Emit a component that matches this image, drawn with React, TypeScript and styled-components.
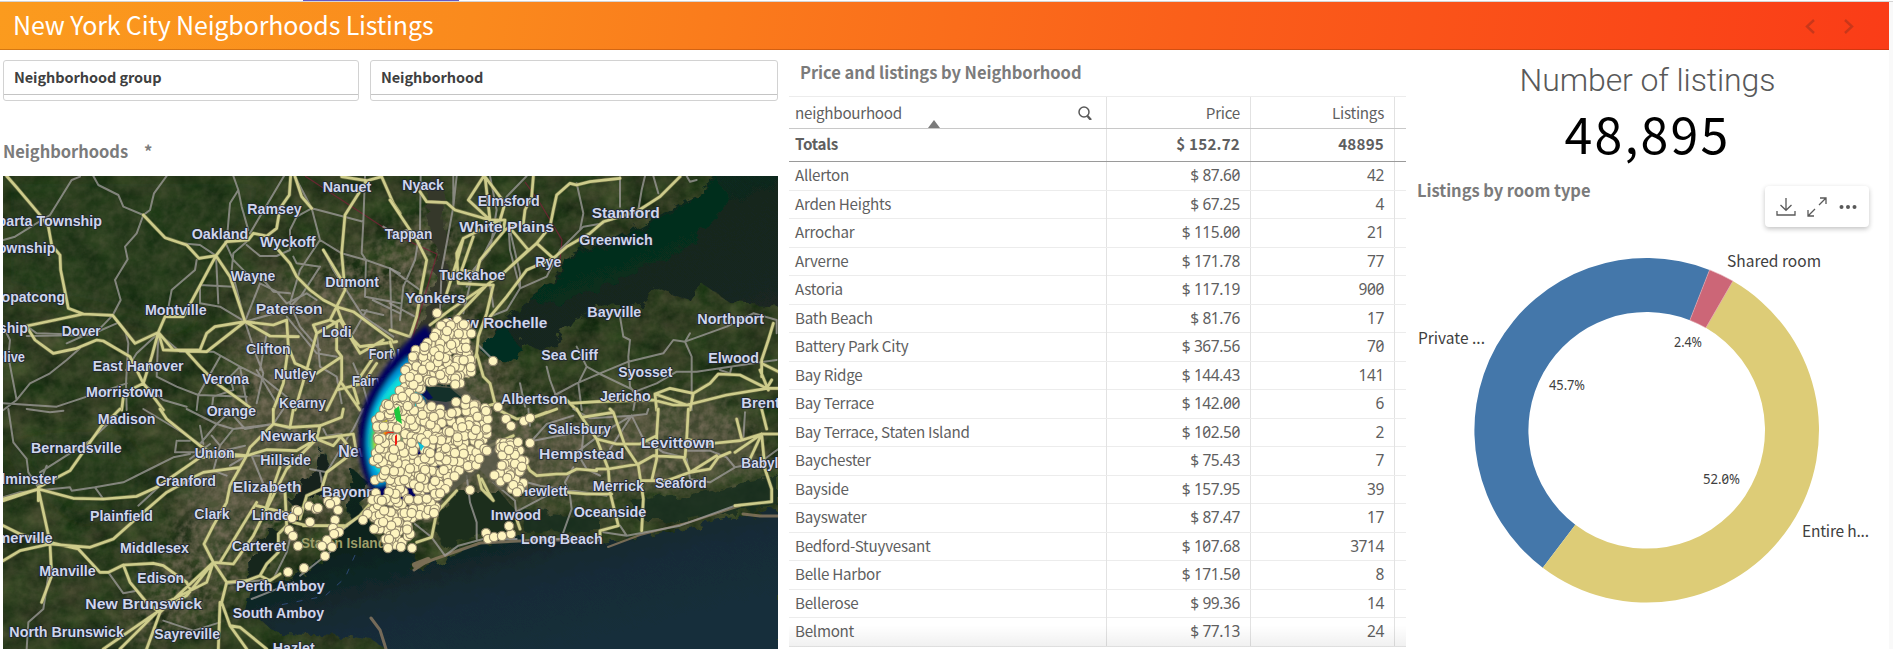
import React from 'react';
import styled, { createGlobalStyle } from 'styled-components';

const Global = createGlobalStyle`
  *{box-sizing:border-box}
  html,body{margin:0;padding:0;background:#fff;overflow:hidden}
  body{font-family:"Noto Sans CJK SC","Noto Sans",sans-serif;color:#595959}
`;

const Page = styled.div`width:1893px;height:649px;display:flex;flex-direction:column;overflow:hidden;background:#fff;`;
const TabStrip = styled.div`height:2px;padding-left:303px;background:#fff;border-bottom:1px solid #d4d4d4;flex:none;`;
const ActiveTab = styled.div`width:156px;height:1px;background:#6459c4;`;
const Body = styled.div`display:flex;flex:1;min-height:0;`;
const Sheet = styled.div`width:1889px;display:flex;flex-direction:column;`;
const Gutter = styled.div`width:4px;background:#f9f9f9;`;
const Header = styled.header`
  height:48px;flex:none;display:flex;align-items:center;justify-content:space-between;padding:0 33px 0 13px;
  background:linear-gradient(100deg,#fb9b1e 0%,#fa8a1d 25%,#fa5f1a 63%,#fa3c17 100%);
  border-bottom:1px solid rgba(120,40,0,.3);
`;
const Title = styled.h1`margin:0;padding-bottom:2px;font-size:25px;line-height:43px;font-weight:400;color:#fff;letter-spacing:-.14px;white-space:pre;`;
const Pager = styled.div`display:flex;gap:24px;padding-top:2px;svg{display:block}`;
const Columns = styled.main`display:flex;flex:1;min-height:0;`;

const Left = styled.section`width:778px;padding:10px 0 0 3px;display:flex;flex-direction:column;`;
const Filters = styled.div`display:flex;gap:11px;height:41px;`;
const FilterBox = styled.div<{ $w: number }>`
  width:${p => p.$w}px;border:1px solid #d2d2d2;border-radius:3px;height:41px;
`;
const FilterName = styled.div`
  height:34px;border-bottom:1px solid #c4c4c4;padding:0 10px;line-height:31px;font-size:14.5px;font-weight:700;color:#404040;white-space:nowrap;letter-spacing:-.08px;
`;
const PanelTitle = styled.h2`
  margin:0;font-size:16.5px;font-weight:700;line-height:22px;color:#7b7b7b;white-space:pre;letter-spacing:-.04px;
`;
const MapHead = styled.div`height:75px;padding-top:39px;display:flex;gap:16px;`;
const MapFrame = styled.div`width:775px;height:473px;svg{display:block}`;

const Middle = styled.section`width:628px;padding:10px 0 0 11px;`;
const TableTitle = styled.div`height:36px;padding:1px 0 0 11px;`;
const Grid = styled.div`
  width:617px;height:551px;border-top:1px solid #ececec;position:relative;
`;
const Row = styled.div<{ $h: number; $line: string; $bold?: boolean }>`
  display:grid;grid-template-columns:318px 144px 144px 11px;height:${p => p.$h}px;
  border-bottom:1px solid ${p => p.$line};font-weight:${p => (p.$bold ? 700 : 400)};
`;
const Cell = styled.div<{ $num?: boolean; $head?: boolean }>`
  display:flex;align-items:center;justify-content:${p => (p.$num ? 'flex-end' : 'space-between')};
  padding:0 ${p => (p.$head && !p.$num ? 13 : 10)}px ${p => (p.$head ? 2 : 4)}px 6px;border-right:1px solid #e2e2e2;font-size:15.2px;line-height:22px;white-space:pre;
  color:#5f5f5f;position:relative;letter-spacing:-.27px;
`;
const Digits = styled.span`font-family:"Noto Sans",sans-serif;font-size:15.5px;font-feature-settings:"zero";letter-spacing:-.4px;padding-top:2px;`;
const Total = styled.span`letter-spacing:.2px;`;
const SortMark = styled.i`
  position:absolute;left:139px;bottom:0;border:6px solid transparent;border-top:0;border-bottom:8px solid #7b7b7b;
`;
const Fade = styled.div`position:absolute;left:0;right:0;bottom:0;height:22px;background:linear-gradient(rgba(0,0,0,0),rgba(0,0,0,.06));`;

const Right = styled.section`flex:1;display:flex;flex-direction:column;padding-left:11px;`;
const Kpi = styled.div`height:124px;width:461px;text-align:center;padding-top:10px;`;
const KpiLabel = styled.div`font-family:Roboto,sans-serif;font-weight:350;font-size:32px;line-height:40px;color:#595959;letter-spacing:-.1px;`;
const KpiValue = styled.div`font-size:50px;line-height:56px;color:#000;margin-top:4px;letter-spacing:2.2px;`;
const ChartHead = styled.div`display:flex;justify-content:space-between;height:54px;padding:5px 20px 0 0;`;
const Tools = styled.div`
  margin-top:7px;width:104px;height:41px;border-radius:4px;background:#fff;box-shadow:0 2px 5px rgba(0,0,0,.24);
  display:flex;justify-content:center;align-items:center;gap:11px;
`;
const ChartArea = styled.div`flex:1;svg{display:block}`;

const rows: [string, string, string][] = [
  ['Allerton', '87.60', '42'], ['Arden Heights', '67.25', '4'], ['Arrochar', '115.00', '21'], ['Arverne', '171.78', '77'],
  ['Astoria', '117.19', '900'], ['Bath Beach', '81.76', '17'], ['Battery Park City', '367.56', '70'], ['Bay Ridge', '144.43', '141'],
  ['Bay Terrace', '142.00', '6'], ['Bay Terrace, Staten Island', '102.50', '2'], ['Baychester', '75.43', '7'], ['Bayside', '157.95', '39'],
  ['Bayswater', '87.47', '17'], ['Bedford-Stuyvesant', '107.68', '3714'], ['Belle Harbor', '171.50', '8'], ['Bellerose', '99.36', '14'],
  ['Belmont', '77.13', '24'],
];

/* The map is split in four tiles, each with its own 1200 x 720 coordinate space. */
type Label = [string, number, number, number, number?];
type Tile = { x: number; y: number; grey: string; yellow: string; labels: Label[] };
const tiles: Tile[] = [
  {
    x: 0, y: 170,
    grey: `M10 210L45 200L150 135L215 30L240 20M280 18L295 45L355 75L370 110L430 135L450 120L462 70L500 18M430 135L410 190L375 230L383 268L345 330L362 390L338 436L375 480L385 520L378 640L380 720M338 436L300 475L200 520M80 498L270 495L350 460M80 468L110 490L270 495M240 535L200 570L150 610L90 640L50 690L10 720M15 480L30 510L25 560L50 690M852 18L750 190M700 18L715 60L690 100L680 215M715 60L725 110L745 180M648 257L655 400M590 270L585 300L515 360L500 440M600 345L700 350M600 345L600 400L660 410L735 455M545 220L600 225L648 257M675 215L700 270L740 310L790 330L820 365L870 370M740 215L700 250L695 300L735 455M735 455L780 340L830 365L860 400L920 370L950 390M735 455L770 560L790 610L770 700M735 455L860 420L905 375L960 290M860 440L950 550L1010 560M740 225L780 258L830 258L870 240M880 260L890 280L960 290M870 240L870 180L890 140L935 115L960 210L1025 250L1098 270M885 20L935 115L1090 155L1095 20M1090 155L1085 250L1098 270L1170 295L1200 310M970 240L1000 300L1090 440L1180 500M1098 270L1095 380L1200 400M1170 295L1175 480M1118 390L1200 430M1085 420L1150 435M1200 200L1150 170M960 210L900 300L870 400L900 470L960 540M1100 420L1060 490M475 490L470 620L530 650L595 675L740 680M475 490L410 550L378 600M475 490L540 545L640 545L720 590L790 625L860 680M720 590L690 620L700 660L640 680L635 720M660 560L595 675L590 720M720 590L740 700M770 600L830 700M10 700L170 710L380 640M430 640L490 690L560 710M950 480L960 590L1010 620L1025 700M1060 580L1090 650L1110 720M800 490L780 600`,
    yellow: `M20 18L48 50L120 135L145 170L155 225L180 255L182 300L205 415L250 432L338 436L405 520L475 487M80 468L250 432M80 470L105 510L160 550L230 535L290 510L310 513L390 560L430 640L490 720M430 135L495 203L560 225L597 265L648 257L680 215L745 210L760 190L800 198L830 175L840 115L868 75L872 18M648 257L550 440L495 440L475 487M648 257L690 320L735 455L645 470L620 490L600 540L490 540L475 487L455 560L430 640L400 655L370 680L365 720M735 455L620 545L490 540M475 487L520 540L555 540L600 590L650 640L720 690L760 720M735 455L820 465L860 450L865 530L885 580L930 600M735 455L810 498L895 500M865 530L850 640L820 720M835 240L870 280L890 320L930 360L970 390L1010 410L1060 425L1175 510M1025 20L1100 32L1145 20L1180 100L1200 130M1100 32L1035 135L1025 250L1035 360L1010 410L1025 450L1060 510L1080 530L1190 515M970 240L1025 330M885 20L905 80L935 115M1010 410L990 450L940 465L950 490L920 600L885 720M990 450L1010 460L1010 540L1025 560L1025 630L1010 660M950 490L1020 450L1080 550L1150 510M1025 560L950 610M1115 570L1060 650L1075 700M1130 580L1090 640L1010 660L980 720M1025 640L1080 720`,
    labels: [['Sparta Township', -36, 306, 168], ['Township', -30, 166, 250], ['Hopatcong', -26, 195, 396], ['Township', -112, 84, 488], ['Mt Olive', -75, 75, 577], ['Dover', 185, 302, 498], ['Oakland', 575, 745, 206], ['Ramsey', 742, 905, 132], ['Wyckoff', 780, 947, 231], ['Wayne', 692, 826, 332], ['Nanuet', 968, 1114, 67], ['Dumont', 976, 1137, 350], ['Montville', 435, 620, 434], ['Paterson', 767, 968, 432, 43], ['Lodi', 966, 1055, 502], ['Clifton', 738, 872, 552], ['East Hanover', 278, 551, 602], ['Morristown', 258, 489, 682], ['Verona', 606, 747, 642], ['Nutley', 822, 949, 628], ['Kearny', 837, 978, 713], ['Fort Lee', 1106, 1255, 567], ['Fairview', 1056, 1215, 649]],
  },
  {
    x: 390, y: 170,
    grey: `M190 18L190 110L170 220L155 300L150 420M92 18L90 180L75 270L40 350L30 450M0 200L50 180L90 220M0 295L90 360M0 400L75 440M200 18L190 110M355 160L360 240L390 355L470 320L510 240L580 170L640 160M390 355L390 310L355 160M390 355L350 420L300 440M410 18L350 80L330 160L230 350M300 18L320 120L300 240L250 300L220 430M560 40L580 130L570 180M690 20L690 110M745 120L755 60L765 18M790 18L805 70M890 18L900 35L920 30M690 440L700 500L720 510L715 560L720 650L735 670M470 590L480 630L495 670M495 675L560 640L630 610L715 575L820 550L850 510L885 515L1010 470L1090 430L1160 450L1160 490M885 515L905 560L905 720M900 490L885 515M560 530L590 590L630 612L740 665L730 720M590 590L565 640L575 720M735 665L800 640L860 605L920 605L1020 590L1160 570M265 525L310 570M390 640L405 710M990 600L1020 610L1025 590M300 345L310 410`,
    yellow: `M90 65L110 95L170 98L195 120L300 150L345 150L340 180L400 160L405 120L425 80L430 20M280 20L235 90L300 150M285 20L300 150M285 20L345 100L330 150L220 205L205 260L170 370M220 205L200 250L205 340L290 345M345 180L270 270L260 310L215 300L250 200M365 180L415 240L345 305L290 345L200 440M290 345L310 345L290 430L265 500L260 550L280 620L300 640L320 720M290 345L180 420L120 465M440 220L490 265L530 230L600 190L640 155L740 125L810 80L870 20M490 265L410 300L350 380L300 440M440 220L480 170L490 120L500 75L540 40L560 45L600 35L690 25M345 305L440 220M0 90L80 210L110 270L95 350L80 440L60 500L0 480M0 515L15 560L0 600M260 550L235 620M1115 620L1115 570L1135 510L1150 460M1115 580L1165 605M1110 600L1135 660M795 672L890 705L1010 675L1130 655L1200 655M795 672L840 655L910 670L960 640L985 612L1050 615L1130 655L1145 630M910 670L900 720M795 672L800 720M320 700L250 720M540 700L620 695L790 690L850 705L900 705M560 720L530 690`,
    labels: [['Nyack', 37, 162, 60], ['Elmsford', 263, 449, 108], ['White Plains', 208, 492, 186, 43], ['Stamford', 605, 809, 143, 43], ['Greenwich', 568, 788, 226], ['Tappan', -16, 127, 206], ['Rye', 436, 514, 292], ['Tuckahoe', 147, 346, 330], ['Yonkers', 45, 227, 400, 43], ['New Rochelle', 172, 472, 473, 43], ['Bayville', 592, 754, 441], ['Northport', 922, 1122, 463], ['Sea Cliff', 454, 624, 571], ['Elwood', 955, 1107, 578], ['Syosset', 685, 847, 621], ['Jericho', 630, 782, 693], ['Albertson', 333, 532, 703], ['Brentwood', 1054, 1285, 714, 43]],
  },
  {
    x: 0, y: 409,
    grey: `M25 0L40 100L80 150L85 190L115 235M120 190L270 95L350 20M10 265L60 250L210 235L215 245L285 235L310 270M285 235L370 220L450 180L520 145L570 135M430 0L530 60L600 105M530 95L525 130L650 130L735 110M570 95L535 95M600 105L650 45L700 0M600 50L610 105M650 45L700 60L820 45L870 60M700 60L660 110L635 80M560 0L650 45M660 110L640 185L680 200M820 45L850 0M755 140L790 225M690 170L740 140L800 140M1090 0L1060 60L1040 90L980 190L930 180M115 230L140 170M1025 75L980 80L970 60M970 240L960 190M325 490L370 553L410 545L435 580M145 500L130 600L85 640L80 720M870 390L860 430L820 510L680 525M900 500L990 430M490 635L580 665L660 640M755 570L880 520M415 290L475 235M700 20L735 60L820 45M1080 320L1020 370M80 0L150 10L190 5M630 105L570 150`,
    yellow: `M10 275L115 240L220 268L310 270L410 262L470 235L600 145M10 270L115 240L115 275M115 240L150 400L235 420L300 490L325 490L370 468L460 463L490 470L560 520L570 540M10 350L60 375L150 405L270 415L340 390L430 310L500 250L590 200L610 190L720 175M150 405L60 425L10 455M150 405L155 500L125 580M115 235L210 185L270 100L305 50L340 20L360 0M480 0L500 30L600 110L630 130L740 140L800 122L890 125L950 90L960 50L1025 25L1030 0M740 140L600 145L470 235M740 140L690 230L680 280L640 350L612 405L640 460L700 465L760 380L860 180L950 90M740 140L750 115L820 45L870 55L960 50M820 45L820 0M870 55L880 0M950 90L1060 75L1070 130M770 280L660 460M855 250L860 350L835 375L835 430L800 465L780 500L740 515M780 500L810 515L840 495M850 310L770 290M640 460L480 610L440 720M640 460L560 560L470 610L310 720M470 610L440 640L360 720M370 468L390 520L440 580L480 610M640 460L620 520L500 580M640 460L680 520L665 580L690 650L740 720M660 580L655 720M690 650L720 655L800 720M680 520L740 515M1140 250L1080 320L1010 370M980 190L1060 130L1020 80M980 190L965 240L920 260L900 330M910 350L1040 350M920 350L880 340M1025 80L1000 110L950 90M840 175L800 290`,
    labels: [['Orange', 620, 768, 20], ['Madison', 293, 466, 45], ['Bernardsville', 93, 365, 131], ['Bedminster', -65, 171, 224], ['Newark', 781, 949, 97, 43], ['Union', 584, 704, 146], ['Hillside', 781, 933, 167], ['New York', 1015, 1230, 145, 49], ['Cranford', 467, 648, 231], ['Elizabeth', 698, 905, 248, 43], ['Plainfield', 270, 459, 336], ['Clark', 583, 689, 330], ['Linden', 756, 895, 333], ['Bayonne', 966, 1150, 263], ['Somerville', -64, 158, 403], ['Middlesex', 360, 567, 432], ['Carteret', 695, 859, 425], ['Manville', 118, 287, 501], ['Edison', 412, 552, 522], ['Perth Amboy', 708, 974, 546], ['New Brunswick', 256, 606, 599, 43], ['South Amboy', 698, 972, 626], ['North Brunswick', 28, 372, 683], ['Sayreville', 463, 660, 691], ['Hazlet', 818, 944, 731]],
  },
  {
    x: 390, y: 409,
    grey: `M725 20L640 70L560 130L590 180L630 200M725 20L600 28L550 0M725 20L770 15L775 0M725 20L660 120M725 20L760 90L820 130L880 145M430 90L470 45L550 20M430 95L560 70M885 125L960 125L1010 145L1035 175L960 220L900 210M900 210L890 150M1035 175L1110 160L1165 120M550 175L525 220L540 260L545 300L520 370M230 200L240 280L260 340L260 390M75 345L125 385L165 440L205 410L280 390L380 390M310 220L375 275L380 330M375 310L470 260M410 220L450 230L650 260M640 370L710 380L870 350L1035 290M690 350L710 380M430 390L580 390M415 0L420 50M1065 10L1060 90M580 75L575 130M330 100L300 140`,
    yellow: `M400 35L460 15L500 0M560 0L575 25L620 90L655 180L660 250L685 350L630 365L630 385M575 25L670 10L705 110L745 170L760 270L755 365M670 10L660 0M620 90L680 105L750 105L800 80L805 0M620 180L655 180L745 165L790 140L880 145L900 190L960 180L985 145L1020 130M800 80L800 150L785 215L750 215M895 0L890 90L885 145M890 90L950 105L1050 95L1115 75L1200 75M1040 30L1055 90M1115 0L1130 60M1035 130L1115 75L1125 180L1145 240L1145 278L1035 290M1115 75L1080 150M885 100L910 95M420 185L440 200L500 195L530 195L560 180L620 185M420 185L400 150M530 250L590 255L665 255M265 200L275 240L310 275L295 250L275 210M380 330L390 360M200 245L140 310L125 385L80 400M320 0L380 30L430 25L470 10M300 110L370 80M785 215L830 215L900 190M900 190L980 140`,
    labels: [['Salisbury', 474, 663, 74], ['Hempstead', 447, 703, 151, 43], ['Levittown', 753, 974, 116, 43], ['Babylon', 1054, 1215, 177], ['Merrick', 608, 762, 246], ['Seaford', 795, 950, 238], ['Hewlett', 385, 533, 261], ['Inwood', 302, 453, 332], ['Oceanside', 551, 769, 325], ['Long Beach', 393, 638, 404]],
  },
];

/* Seeded generator: the listing markers keep their places between renders. */
let seed = 11;
const rnd = () => { seed = (seed * 16807) % 2147483647; return seed / 2147483647; };
type P = [number, number];
const inside = (x: number, y: number, poly: P[]) => {
  let r = false;
  for (let i = 0, j = poly.length - 1; i < poly.length; j = i++) {
    const [a, b] = poly[i], [c, d] = poly[j];
    if (b > y !== d > y && x < ((c - a) * (y - b)) / (d - b) + a) r = !r;
  }
  return r;
};
const areas: P[][] = [
  [[446, 322], [466, 319], [472, 332], [469, 345], [470, 358], [478, 373], [470, 377], [462, 386], [452, 386], [446, 380], [425, 384], [420, 394], [412, 402], [398, 424], [390, 430], [376, 432], [379, 415], [386, 402], [394, 392], [402, 378], [406, 364], [414, 349], [428, 334], [440, 326]],
  [[376, 420], [390, 408], [402, 400], [424, 398], [432, 406], [448, 404], [454, 410], [464, 416], [462, 402], [480, 403], [488, 410], [490, 432], [482, 442], [490, 446], [480, 462], [474, 470], [462, 472], [448, 486], [440, 496], [438, 514], [422, 516], [408, 520], [414, 548], [388, 549], [382, 532], [364, 512], [372, 497], [386, 482], [374, 480], [378, 472], [372, 458], [376, 444]],
  [[484, 468], [494, 474], [506, 460], [496, 456], [498, 443], [508, 440], [518, 441], [526, 462], [522, 472], [526, 492], [516, 494], [504, 484], [484, 480]],
];
const markers: P[] = [];
areas.forEach(a => {
  for (let y = 312; y < 554; y += 5.6)
    for (let x = 360; x < 535; x += 5.6) {
      const px = x + rnd() * 6 - 3, py = y + rnd() * 6 - 3;
      if (rnd() < 0.94 && inside(px, py, a)) markers.push([px, py]);
    }
});
markers.sort((a, b) => ((a[0] * 7919 + a[1] * 104) % 13) - ((b[0] * 7919 + b[1] * 104) % 13));
markers.push(
  [437, 313], [493, 361], [456, 402], [466, 399], [486, 411], [498, 407], [506, 419], [511, 426], [524, 421], [530, 418], [530, 443], [518, 442], [509, 450], [470, 490], [363, 520], [374, 529], [389, 539], [412, 548], [401, 547], [388, 548], [434, 513],
  [486, 533], [488, 539], [494, 537], [502, 536], [511, 534], [509, 526],
  [296, 510], [292, 518], [298, 511], [309, 506], [316, 509], [318, 508], [310, 522], [289, 530], [293, 536], [298, 546], [328, 501], [336, 501], [330, 504], [338, 510], [335, 520], [333, 528], [339, 532], [334, 534], [327, 540], [322, 546], [332, 547], [325, 556], [288, 572], [304, 568],
);

const NycMap = () => (
  <svg width="775" height="473" viewBox="3 176 775 473">
    <defs>
      <filter id="land" x="0" y="0" width="100%" height="100%" colorInterpolationFilters="sRGB">
        <feTurbulence type="fractalNoise" baseFrequency=".035 .045" numOctaves="5" seed="4" />
        <feColorMatrix values=".26 .1 0 0 -.01  .16 .16 0 0 .075  .16 .06 0 0 .005  0 0 0 0 1" />
      </filter>
      <filter id="town" x="0" y="0" width="100%" height="100%" colorInterpolationFilters="sRGB">
        <feTurbulence type="fractalNoise" baseFrequency=".13" numOctaves="3" seed="9" result="n" />
        <feColorMatrix in="n" values="0 0 0 0 .44  0 0 0 0 .41  0 0 0 0 .33  1.8 .8 0 0 -.93" result="g" />
        <feGaussianBlur in="SourceGraphic" stdDeviation="16" result="b" />
        <feComposite in="g" in2="b" operator="in" />
      </filter>
      <filter id="soft"><feGaussianBlur stdDeviation="12" /></filter>
      <filter id="coast"><feTurbulence type="fractalNoise" baseFrequency=".08" numOctaves="3" seed="3" /><feDisplacementMap in="SourceGraphic" scale="14" /><feGaussianBlur stdDeviation=".6" /></filter>
      <filter id="heat"><feGaussianBlur stdDeviation="2" /></filter>
      <linearGradient id="sea" x1="0" y1="0" x2=".7" y2="1">
        <stop offset="0" stopColor="#10261f" /><stop offset=".4" stopColor="#0e231f" /><stop offset=".68" stopColor="#162c37" /><stop offset="1" stopColor="#172e3b" />
      </linearGradient>
      <linearGradient id="sound" x1="0" y1="0" x2=".6" y2="1">
        <stop offset="0" stopColor="#062c20" /><stop offset=".5" stopColor="#12281f" /><stop offset="1" stopColor="#1b2720" />
      </linearGradient>
    </defs>
    <rect x="3" y="176" width="775" height="473" filter="url(#land)" />
    <g filter="url(#soft)" opacity=".45">
      <path d="M3 176H280L235 240L180 330L100 310L3 290z" fill="#1b3814" />
      <path d="M3 450L80 520L160 490L120 440L60 440z" fill="#1b3814" />
      <path d="M240 270L300 290L400 300L520 430L720 400L770 470L520 500L300 480L200 560L180 480L250 400z" fill="#69644f" />
    </g>
    <g filter="url(#town)">
      <path d="M260 290L400 240L450 196L470 300L520 400L720 400L778 470L560 500L420 530L300 520L230 600L150 649L120 640L180 520L220 400z" fill="#fff" />
      <path d="M3 176H778V649H3z" fill="#fff" opacity=".22" />
    </g>
    <g filter="url(#coast)">
      <path d="M716 170L702 194L680 203L655 218L618 238L588 248L568 254L562 268L545 288L528 300L514 310L500 322L488 352L510 356L525 342L540 350L560 338L572 320L600 308L640 304L655 288L690 300L700 282L730 303L785 306L785 170z" fill="url(#sound)" />
      <path d="M716 176L702 194L655 222L600 248L568 256L560 276L530 300L560 304L620 280L690 245L730 200z" fill="#02301f" opacity=".7" />
      <path d="M480 350L505 325L522 350L510 360L490 358z" fill="#062d20" />
      <path d="M434 176L426 215L438 250L432 300L412 340L385 380L360 420L362 460L368 420L398 380L422 350L446 300L446 250L442 176z" fill="#34372b" />
      <path d="M322 450L315 470L300 490L288 500L296 510L320 490L330 465z" fill="#13241f" />
      <path d="M250 590L248 560L270 530L282 530L265 570z" fill="#13251f" />
      <path d="M352 470L366 480L362 505L380 545L413 552L412 572L440 562L470 548L515 538L600 542L690 528L780 508V655H395L372 640L345 636L280 634L245 610L250 590L290 578L330 555L348 520z" fill="url(#sea)" />
      <path d="M435 530L440 510L460 492L500 492L515 510L512 532L470 535L446 550z" fill="#1b2f1d" />
      <path d="M420 388L450 386L466 398L440 406z" fill="#102b24" />
      <path d="M520 510L600 520L600 530L525 532z M630 500L700 495L778 475V505L690 522L640 522z" fill="#1b3020" opacity=".85" />
    </g>
    <g fill="none" stroke="#8d7b62" strokeWidth="4" strokeLinecap="round" opacity=".8">
      <path d="M414 570L426 562L446 555L480 543L540 540L598 540" strokeWidth="3" />
      <path d="M608 547L640 535L690 522L740 506" strokeWidth="2" />
      <path d="M743 514L760 516L778 516" strokeWidth="3" />
      <path d="M371 618L380 630L386 649" strokeWidth="3" />
      <path d="M415 565L428 560" strokeWidth="6" />
    </g>
    <path d="M305 176L395 235L437 254L412 340M525 182L540 203L562 240L560 260" fill="none" stroke="#7d1f38" strokeWidth="1.2" opacity=".75" />
    <path d="M355 555L345 578L325 596L275 606" fill="none" stroke="#35518a" strokeWidth="1" strokeDasharray="6 9" opacity=".8" />
    {tiles.map((t, i) => (
      <g key={i} transform={`translate(${t.x} ${t.y}) scale(.33333)`} fill="none" strokeLinejoin="round" strokeLinecap="round">
        <path d={t.grey} stroke="#a09d9c" strokeWidth="6" opacity=".75" />
        <path d={t.yellow} stroke="#8b8757" strokeWidth="12" opacity=".6" />
        <path d={t.yellow} stroke="#dcd995" strokeWidth="8" opacity=".88" />
      </g>
    ))}
    {tiles.map((t, i) => (
      <g key={i} transform={`translate(${t.x} ${t.y}) scale(.33333)`} fontFamily="Liberation Sans, sans-serif" fontWeight="700"
        fill="#cfd6ec" stroke="#1d2430" strokeWidth="5" paintOrder="stroke" strokeLinejoin="round">
        {t.labels.map(([s, a, b, y, size]) => (
          <text key={s + y} x={a} y={y} fontSize={size ?? 42} textLength={b - a} lengthAdjust="spacingAndGlyphs">{s}</text>
        ))}
      </g>
    ))}
    <text x="301" y="548" fontSize="14" fontFamily="Liberation Sans, sans-serif" fontWeight="700" fill="#9c9d68" textLength="85" lengthAdjust="spacingAndGlyphs">Staten Island</text>
    <g filter="url(#heat)">
      <path d="M426 325C404 342 384 366 370 392C356 418 356 450 364 475C370 490 378 500 390 505L440 500L450 400L424 398L428 384L440 350z" fill="#04065e" />
      <path d="M410 356C390 374 377 394 370 416C363 440 366 466 376 486L400 480L425 400L414 380z" fill="#0497d8" />
      <path d="M402 374C387 388 378 402 372 420C367 440 369 460 379 474L400 460L420 420L416 385z" fill="#0fe0dc" />
      <path d="M394 394C383 403 375 418 371 434C369 448 374 462 383 468L404 450L408 405z" fill="#19c83c" />
      <path d="M386 412C377 422 374 438 375 450L388 460L398 440L396 420z" fill="#e0e01a" />
      <path d="M388 424L381 440L386 452L398 448L397 428z" fill="#f3190e" />
    </g>
    <path d="M424 384L462 388L480 400L488 440L520 440L528 490L500 490L480 470L440 500L420 490L430 420L425 398z" fill="#5d5c4c" opacity=".8" />
    <path d="M427 386L450 388L462 398L446 402L430 400L422 395z" fill="#14302a" />
    <path d="M421 393L426 389L433 398L428 400z" fill="#05105c" />
    <g>
      {markers.map(([x, y], i) => (
        <circle key={i} cx={x} cy={y} r="4.6" fill="#fdf4bf" stroke="#94896f" strokeWidth="1.2" />
      ))}
    </g>
    <path d="M395 436L397 434V444L395 446z" fill="#f31a10" />
    <path d="M394 410L399 406L402 424L396 420z" fill="#1cc83c" />
    <path d="M418 442L424 446L421 451z" fill="#0cc3dc" />
  </svg>
);

const CX = 229.7, CY = 202.3;
const ring = (a: number, b: number, R = 172.3, r = 118.3) => {
  const p = (d: number, q: number) => `${CX + q * Math.sin((d * Math.PI) / 180)} ${CY - q * Math.cos((d * Math.PI) / 180)}`;
  const big = b - a > 180 ? 1 : 0;
  return `M${p(a, R)}A${R} ${R} 0 ${big} 1 ${p(b, R)}L${p(b, r)}A${r} ${r} 0 ${big} 0 ${p(a, r)}Z`;
};

const ChartLabels = styled.g`font-family:"Noto Sans CJK SC",sans-serif;font-size:15.5px;fill:#404040;`;
const ChartValues = styled.g`font-family:"Noto Sans",sans-serif;font-size:13.8px;fill:#404040;font-feature-settings:"zero";`;

const Donut = () => (
  <svg width="472" height="421" viewBox="0 0 472 421">
    <path d={ring(217.1, 381.4)} fill="#4477aa" />
    <path d={ring(30, 217.1)} fill="#ddcc77" />
    <path d={ring(21.4, 30)} fill="#cc6677" stroke="#e3a9b0" strokeWidth=".6" />
    <ChartLabels>
      <text x="310" y="39" textLength="94">Shared room</text>
      <text x="1" y="116" textLength="67">Private ...</text>
      <text x="385" y="309" textLength="67">Entire h...</text>
    </ChartLabels>
    <ChartValues>
      <text x="257" y="119" textLength="28" lengthAdjust="spacingAndGlyphs">2.4%</text>
      <text x="132" y="162" textLength="36" lengthAdjust="spacingAndGlyphs">45.7%</text>
      <text x="286" y="256" textLength="37" lengthAdjust="spacingAndGlyphs">52.0%</text>
    </ChartValues>
  </svg>
);

export default function App() {
  return (
    <Page>
      <Global />
      <TabStrip><ActiveTab /></TabStrip>
      <Body>
        <Sheet>
          <Header>
            <Title>New York City Neigborhoods Listings</Title>
            <Pager>
              {['M10 2L3 8.5L10 15', 'M3 2L10 8.5L3 15'].map(d => (
                <svg key={d} width="14" height="17" viewBox="0 0 14 17" fill="none" stroke="#c9371a" strokeWidth="2.4"><path d={d} /></svg>
              ))}
            </Pager>
          </Header>
          <Columns>
            <Left>
              <Filters>
                <FilterBox $w={356}><FilterName>Neighborhood group</FilterName></FilterBox>
                <FilterBox $w={408}><FilterName>Neighborhood</FilterName></FilterBox>
              </Filters>
              <MapHead><PanelTitle>Neighborhoods</PanelTitle><PanelTitle>*</PanelTitle></MapHead>
              <MapFrame><NycMap /></MapFrame>
            </Left>
            <Middle>
              <TableTitle><PanelTitle>Price and listings by Neighborhood</PanelTitle></TableTitle>
              <Grid>
                <Row $h={32} $line="#c8c8c8">
                  <Cell $head>neighbourhood<SortMark />
                    <svg width="15" height="17" viewBox="0 0 15 17" fill="none" stroke="#595959"><circle cx="6" cy="9" r="5" strokeWidth="1.5" /><path d="M9.5 13L13 17" strokeWidth="2.4" /></svg>
                  </Cell>
                  <Cell $num $head>Price</Cell><Cell $num $head>Listings</Cell><div />
                </Row>
                <Row $h={33} $line="#9a9a9a" $bold>
                  <Cell>Totals</Cell><Cell $num><Total>$ 152.72</Total></Cell><Cell $num><Total>48895</Total></Cell><div />
                </Row>
                {rows.map(([name, price, count]) => (
                  <Row key={name} $h={28.53} $line="#ececec">
                    <Cell>{name}</Cell><Cell $num><Digits>$ {price}</Digits></Cell><Cell $num><Digits>{count}</Digits></Cell><div />
                  </Row>
                ))}
                <Fade />
              </Grid>
            </Middle>
            <Right>
              <Kpi><KpiLabel>Number of listings</KpiLabel><KpiValue>48,895</KpiValue></Kpi>
              <ChartHead>
                <PanelTitle>Listings by room type</PanelTitle>
                <Tools>
                  <svg width="20" height="20" viewBox="0 0 20 20" fill="none" stroke="#595959" strokeWidth="1.3"><path d="M10 1V13M4.5 8L10 13.3L15.5 8M1 14V18H19V14" /></svg>
                  <svg width="20" height="20" viewBox="0 0 20 20" fill="none" stroke="#595959" strokeWidth="1.3"><path d="M13 1H19V7M19 1L12 8M1 13V19H7M1 19L8 12" /></svg>
                  <svg width="20" height="20" viewBox="0 0 20 20" fill="#595959"><circle cx="3.5" cy="10" r="2" /><circle cx="10" cy="10" r="2" /><circle cx="16.5" cy="10" r="2" /></svg>
                </Tools>
              </ChartHead>
              <ChartArea><Donut /></ChartArea>
            </Right>
          </Columns>
        </Sheet>
        <Gutter />
      </Body>
    </Page>
  );
}
